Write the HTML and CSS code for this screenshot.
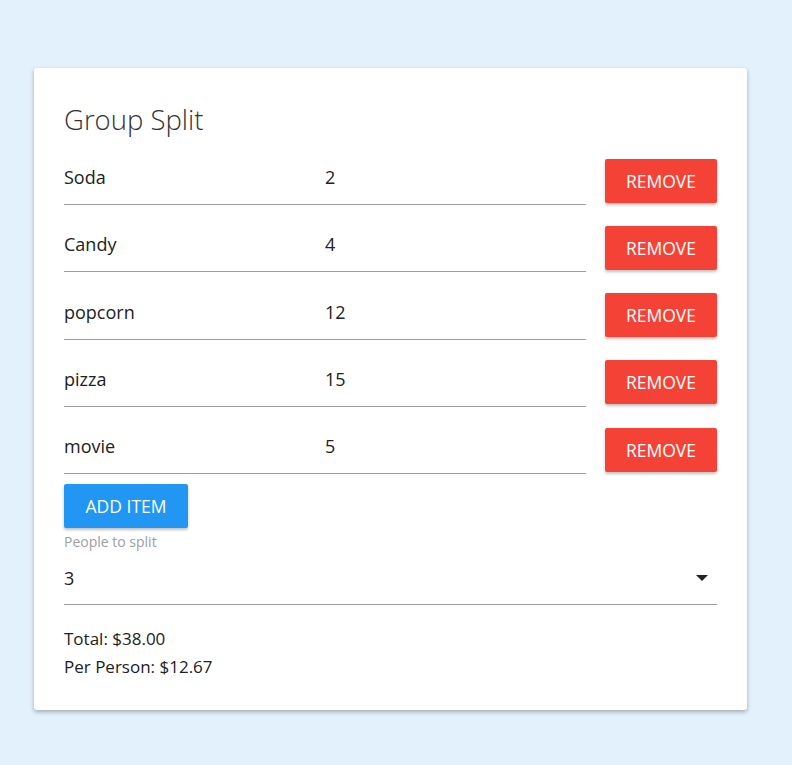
FILE: index.html
```html
<!DOCTYPE html>
<html lang="en">
<head>
<meta charset="utf-8">
<title>Group Split</title>
<link rel="stylesheet" href="styles.css">
</head>
<body>
<div class="card">
  <h1 class="title">Group Split</h1>
  <div class="items">
    <div class="row">
      <div class="field"><span>Soda</span></div>
      <div class="field"><span>2</span></div>
      <button class="btn btn-red">Remove</button>
    </div>
    <div class="row">
      <div class="field"><span>Candy</span></div>
      <div class="field"><span>4</span></div>
      <button class="btn btn-red">Remove</button>
    </div>
    <div class="row">
      <div class="field"><span>popcorn</span></div>
      <div class="field"><span>12</span></div>
      <button class="btn btn-red">Remove</button>
    </div>
    <div class="row">
      <div class="field"><span>pizza</span></div>
      <div class="field"><span>15</span></div>
      <button class="btn btn-red">Remove</button>
    </div>
    <div class="row">
      <div class="field"><span>movie</span></div>
      <div class="field"><span>5</span></div>
      <button class="btn btn-red">Remove</button>
    </div>
  </div>
  <button class="btn btn-blue add">Add Item</button>
  <div class="label">People to split</div>
  <div class="select">
    <span>3</span>
    <svg class="arrow" width="12" height="6" viewBox="0 0 12 6"><path d="M0 0h12L6 6z" fill="#222"/></svg>
  </div>
  <div class="totals">
    <div>Total: $38.00</div>
    <div>Per Person: $12.67</div>
  </div>
</div>
</body>
</html>
```

FILE: styles.css
```css
html, body {
  margin: 0;
  padding: 0;
}
body {
  background: #e3f1fd;
  font-family: "Open Sans", "Liberation Sans", sans-serif;
  color: #212121;
  padding: 68px 45px 55px 34px;
}
.card {
  width: 713px;
  box-sizing: border-box;
  background: #fff;
  border-radius: 3px;
  box-shadow: 0 2px 4px rgba(0,0,0,0.3);
  padding: 30px 30px 29px 30px;
}
.title {
  margin: 4px 0 18px;
  font-size: 27.5px;
  line-height: 36px;
  font-weight: 300;
  color: #333;
}
.items {
  display: flex;
  flex-direction: column;
  gap: 18.3px;
}
.row {
  display: flex;
  align-items: center;
}
.field {
  width: 261px;
  padding: 9px 0 15px;
  line-height: 24px;
  font-size: 18px;
  border-bottom: 1px solid #9e9e9e;
}
.row .btn {
  margin-left: 19px;
}
.btn {
  height: 44px;
  border: none;
  border-radius: 2px;
  color: #fff;
  font-family: inherit;
  font-size: 17.5px;
  text-transform: uppercase;
  box-shadow: 0 2px 3px rgba(0,0,0,0.25);
  padding: 0;
}
.btn-red {
  width: 112px;
  background: #f44336;
}
.btn-blue {
  width: 124px;
  background: #2196f3;
}
.add {
  display: block;
  margin-top: 10px;
}
.label {
  font-size: 14px;
  line-height: 16px;
  color: #9e9e9e;
  margin-top: 6px;
}
.select {
  display: flex;
  align-items: center;
  justify-content: space-between;
  padding: 16px 9px 14px 0;
  line-height: 24px;
  font-size: 18px;
  border-bottom: 1px solid #9e9e9e;
}
.arrow {
  display: block;
}
.totals {
  margin-top: 20px;
  font-size: 17px;
  line-height: 28px;
}
```
